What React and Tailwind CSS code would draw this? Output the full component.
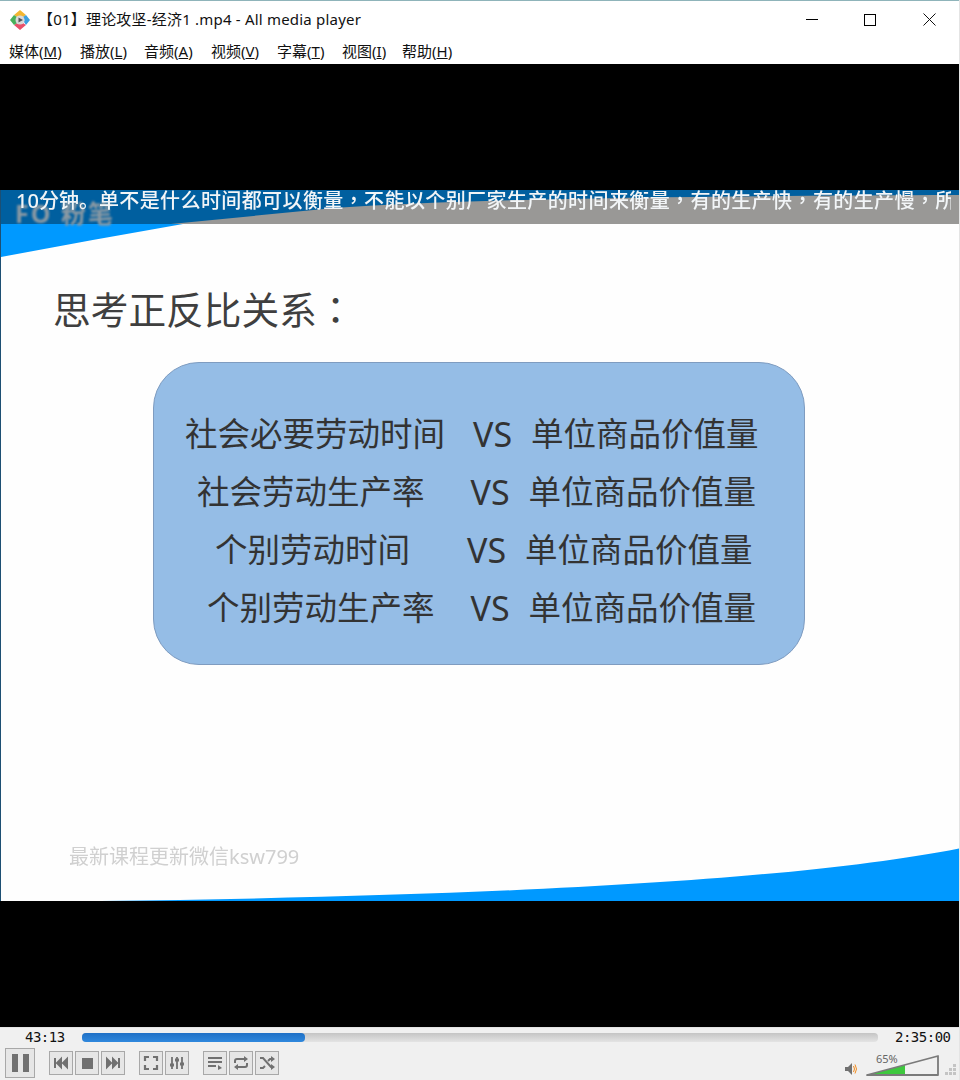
const menus = [
  { label: '媒体', key: 'M', cls: 'w-[71px]' },
  { label: '播放', key: 'L', cls: 'w-[64px]' },
  { label: '音频', key: 'A', cls: 'w-[67px]' },
  { label: '视频', key: 'V', cls: 'w-[66px]' },
  { label: '字幕', key: 'T', cls: 'w-[65px]' },
  { label: '视图', key: 'I', cls: 'w-[60px]' },
  { label: '帮助', key: 'H', cls: 'w-[60px]' },
]

const ui = { fontFamily: '"Noto Sans", "Noto Sans CJK SC", sans-serif' }

function AppIcon() {
  return (
    <svg width="22" height="22" viewBox="0 0 22 22">
      <path d="M11 1 L17 6 L14 8 Q11 6 8 8 L5 6 Z" fill="#f2b632" />
      <path d="M17 6 L21 11 L17 16 L15 13 Q16 11 14 8 Z" fill="#3aa0e0" />
      <path d="M17 16 L11 21 L5 16 L8 14 Q11 16 14 14 Z" fill="#e8506a" />
      <path d="M5 16 L1 11 L5 6 L8 8 Q6 11 8 14 Z" fill="#49b05a" />
      <circle cx="11" cy="11" r="4.5" fill="#d8d8d8" />
      <path d="M9.5 8.5 L14 11 L9.5 13.5 Z" fill="#555" />
    </svg>
  )
}

function CtrlButton({ children }) {
  return (
    <button className="w-6 h-6 flex items-center justify-center border border-[#a8a8a8] bg-[#e6e6e6]">
      {children}
    </button>
  )
}

function Icon({ children }) {
  return <svg width="18" height="18" viewBox="0 0 18 18" fill="#707070" stroke="#707070">{children}</svg>
}

function CompareRow({ left, pad, vsGap }) {
  return (
    <div className={`flex items-center h-[58px] ${pad}`}>
      <span>{left}</span>
      <span className={`${vsGap} text-[34px]`}>VS</span>
      <span className="ml-[19px]">单位商品价值量</span>
    </div>
  )
}

export default function App() {
  return (
    <div className="w-[960px] h-[1080px] overflow-hidden flex flex-col bg-white border-r border-[#e4e4e4]" style={ui}>
      {/* title bar */}
      <div className="h-[38px] shrink-0 flex items-center border-t border-[#8fb4ba] pl-[9px]">
        <AppIcon />
        <span className="ml-[7px] text-[15px] tracking-[0.2px] text-[#111] whitespace-nowrap">【01】理论攻坚-经济1 .mp4 - All media player</span>
        <div className="ml-auto flex items-center pr-[23px]">
          <div className="w-3 h-px bg-black" />
          <div className="ml-[46px] w-3 h-3 border border-black" />
          <svg className="ml-[47px]" width="13" height="13" viewBox="0 0 13 13" stroke="#111" strokeWidth="1"><path d="M0.5 0.5 L12.5 12.5 M12.5 0.5 L0.5 12.5" /></svg>
        </div>
      </div>

      {/* menu */}
      <div className="h-[26px] shrink-0 flex items-center pl-[9px] text-[15px] text-[#111]">
        {menus.map(m => (
          <span key={m.key} className={`${m.cls} whitespace-nowrap`}>
            {m.label}(<span className="underline">{m.key}</span>)
          </span>
        ))}
      </div>

      <div className="h-[126px] shrink-0 bg-black" />

      {/* video frame */}
      <div className="h-[711px] shrink-0 relative overflow-hidden bg-[#fefefe] border-l border-[#1d4f73]">
        <svg className="absolute inset-0" width="960" height="711" viewBox="0 0 960 711">
          <rect x="0" y="0" width="960" height="34" fill="#999896" />
          <path d="M0 0 H960 V5 C700 6 480 8 333 18 L170 34 H0 Z" fill="#005f9f" />
          <path d="M0 34 H182 Q90 50 0 67 Z" fill="#0099ff" />
          <path d="M100 711 C500 706 800 690 960 658 V711 Z" fill="#0099ff" />
        </svg>

        {/* burned in logo and subtitle */}
        <div className="absolute left-[14px] top-[8px] text-[25px] leading-[30px] tracking-[2px] font-bold text-[#8a99a3] whitespace-nowrap blur-[1px]">FO 粉笔</div>
        <div className="absolute left-[15px] top-[-2px] w-[935px] overflow-hidden whitespace-nowrap text-[20px] leading-[24px] tracking-[0.4px] font-medium text-[#f2f5f7] blur-[0.4px]">
          <span className="tracking-normal">10分钟。</span><span className="font-['Noto_Sans_CJK_TC',sans-serif]">单不是什么时间都可以衡量，不能以个别厂家生产的时间来衡量，有的生产快，有的生产慢，所</span>
        </div>

        <div className="relative flex flex-col">
          <h1 className="mt-[90px] ml-[52px] h-[56px] text-[37.7px] leading-[56px] text-[#3f3f3f] whitespace-nowrap">
            思考正反比关系<span className="font-['Noto_Sans_CJK_TC',sans-serif]">：</span>
          </h1>

          <div className="mt-[26px] ml-[152px] w-[652px] h-[303px] rounded-[46px] bg-[#95bde6] border border-[#7f9cc0] pt-[42px] text-[32.5px] leading-[58px] text-[#333] whitespace-nowrap">
            <CompareRow left="社会必要劳动时间" pad="pl-[31px]" vsGap="ml-[28px]" />
            <CompareRow left="社会劳动生产率" pad="pl-[43px]" vsGap="ml-[46px]" />
            <CompareRow left="个别劳动时间" pad="pl-[61px]" vsGap="ml-[57px]" />
            <CompareRow left="个别劳动生产率" pad="pl-[53px]" vsGap="ml-[36px]" />
          </div>

          <div className="mt-[178px] ml-[68px] text-[20px] leading-[28px] text-[#d0d0d0] blur-[0.3px]">最新课程更新微信ksw799</div>
        </div>
      </div>

      <div className="h-[126px] shrink-0 bg-black" />

      {/* controls */}
      <div className="h-[53px] shrink-0 bg-[#f0f0f0] flex flex-col border-t border-[#e4e4e4]">
        <div className="h-[19px] flex items-center">
          <span className="w-[82px] pl-[25px] text-[14px] font-['DejaVu_Sans_Mono',monospace] tracking-[-0.5px] text-[#111]">43:13</span>
          <div className="w-[796px] h-[9px] rounded-[4px] bg-gradient-to-b from-[#c4c4c4] to-[#e4e4e4]">
            <div className="w-[223px] h-full rounded-[4px] bg-gradient-to-b from-[#1f70c6] to-[#2f88dd]" />
          </div>
          <span className="ml-[17px] text-[14px] font-['DejaVu_Sans_Mono',monospace] tracking-[-0.5px] text-[#111]">2:35:00</span>
        </div>
        <div className="flex items-center pl-[5px] h-[32px]">
          <button className="w-[30px] h-[30px] flex items-center justify-center border border-[#a8a8a8] bg-[#e6e6e6]">
            <div className="flex gap-[5px]">
              <div className="w-[6px] h-[18px] bg-[#707070]" />
              <div className="w-[6px] h-[18px] bg-[#707070]" />
            </div>
          </button>
          <div className="flex gap-[2px] ml-[14px]">
            <CtrlButton><Icon><path d="M3 4 V14 M9 5 L5 9 L9 13 Z M15 5 L11 9 L15 13 Z" strokeWidth="2" /></Icon></CtrlButton>
            <CtrlButton><div className="w-[11px] h-[11px] bg-[#707070]" /></CtrlButton>
            <CtrlButton><Icon><path d="M15 4 V14 M9 5 L13 9 L9 13 Z M3 5 L7 9 L3 13 Z" strokeWidth="2" /></Icon></CtrlButton>
          </div>
          <div className="flex gap-[2px] ml-[14px]">
            <CtrlButton><Icon><path d="M3 7 V3 H7 M11 3 H15 V7 M15 11 V15 H11 M7 15 H3 V11" fill="none" strokeWidth="2.2" /></Icon></CtrlButton>
            <CtrlButton><Icon><path d="M4 3 V15 M9 3 V15 M14 3 V15" fill="none" strokeWidth="1.8" /><path d="M2 11 H6 M7 6 H11 M12 10 H16" fill="none" strokeWidth="3" /></Icon></CtrlButton>
          </div>
          <div className="flex gap-[2px] ml-[14px]">
            <CtrlButton><Icon><path d="M2 4 H16 M2 8 H16 M2 12 H10" fill="none" strokeWidth="2" /><path d="M12 11 L16 14 L12 16 Z" stroke="none" /></Icon></CtrlButton>
            <CtrlButton><Icon><path d="M3 9 V7 Q3 5 5 5 H13 M15 9 V11 Q15 13 13 13 H5" fill="none" strokeWidth="2" /><path d="M12 2 L16 5 L12 8 Z M6 10 L2 13 L6 16 Z" stroke="none" /></Icon></CtrlButton>
            <CtrlButton><Icon><path d="M2 4 H5 L13 13 H15 M2 14 H5 L7 12 M10 7 L12 5 H15" fill="none" strokeWidth="2" /><path d="M13 2 L17 5 L13 8 Z M13 10 L17 13 L13 16 Z" stroke="none" /></Icon></CtrlButton>
          </div>

          <div className="ml-auto flex items-end h-full pb-[3px]">
            <svg width="12" height="12" viewBox="0 0 12 12" className="mb-[1px]">
              <path d="M0 4 H3 L7 0 V12 L3 8 H0 Z" fill="#707070" />
              <path d="M8.5 3 Q10.5 6 8.5 9 M10 1.5 Q13 6 10 10.5" fill="none" stroke="#f08a1d" strokeWidth="1" />
            </svg>
            <div className="relative ml-[9px] w-[73px] h-[22px]">
              <svg width="73" height="22" viewBox="0 0 73 22">
                <path d="M1 21 L39 11 V21 Z" fill="#3ec83e" />
                <path d="M1 21 L72 2 V21 Z" fill="none" stroke="#7a7a7a" strokeWidth="1.8" strokeLinejoin="round" />
              </svg>
              <span className="absolute left-[10px] top-[-1px] text-[11px] leading-[12px] text-[#666]">65%</span>
            </div>
            <svg width="12" height="12" viewBox="0 0 12 12" className="ml-[6px] mr-[2px]" fill="#c4c4c4">
              <rect x="8" y="0" width="3" height="3" />
              <rect x="4" y="4" width="3" height="3" />
              <rect x="8" y="4" width="3" height="3" />
              <rect x="0" y="8" width="3" height="3" />
              <rect x="4" y="8" width="3" height="3" />
              <rect x="8" y="8" width="3" height="3" />
            </svg>
          </div>
        </div>
      </div>
    </div>
  )
}
